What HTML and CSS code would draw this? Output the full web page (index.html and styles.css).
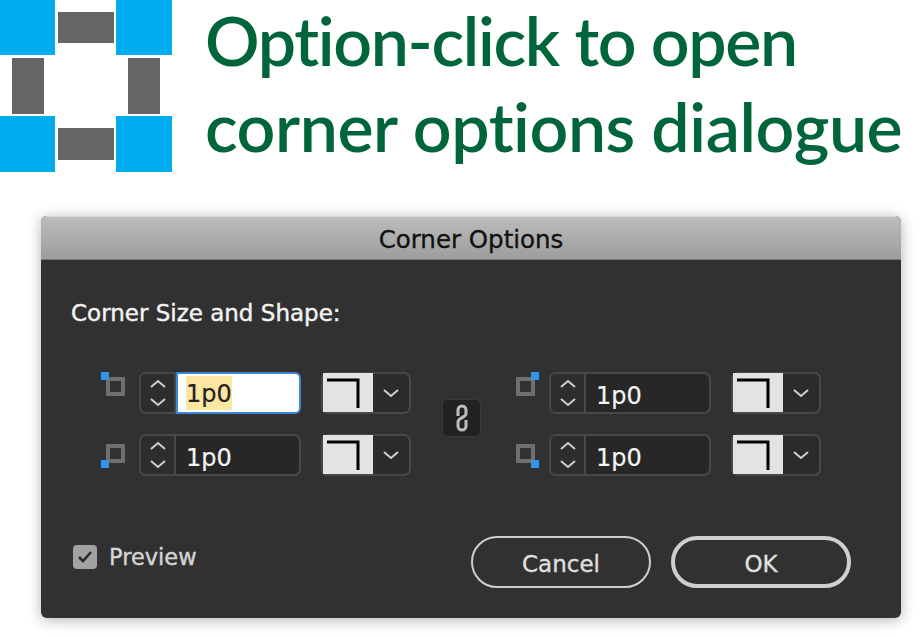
FILE: index.html
```html
<!DOCTYPE html>
<html>
<head>
	<meta charset="UTF-8">
	<title>Corner Options</title>
	<link rel="stylesheet" href="styles.css">
</head>
<body>
	<header class="banner">
		<svg class="logo" width="172" height="172" viewBox="0 0 172 172">
			<rect x="0" y="0" width="55" height="55" fill="#00adef"/>
			<rect x="116" y="0" width="56" height="55" fill="#00adef"/>
			<rect x="0" y="116" width="55" height="56" fill="#00adef"/>
			<rect x="116" y="116" width="56" height="56" fill="#00adef"/>
			<rect x="58" y="12" width="56" height="31" fill="#666567"/>
			<rect x="58" y="128" width="56" height="32" fill="#666567"/>
			<rect x="12" y="58" width="32" height="56" fill="#666567"/>
			<rect x="128" y="58" width="32" height="56" fill="#666567"/>
		</svg>
		<h1 class="headline">
			<span class="line-one">Option-click to open</span><br>
			<span class="line-two">corner options dialogue</span>
		</h1>
	</header>

	<section class="dialog">
		<div class="titlebar">Corner Options</div>
		<div class="dialog-body">
			<div class="section-label">Corner Size and Shape:</div>

			<div class="fields">
				<div class="group group-left">
					<div class="row">
						<svg class="corner corner-high" width="26" height="26" viewBox="0 0 26 26">
							<rect x="8" y="7" width="15" height="15" fill="none" stroke="#6f6f6f" stroke-width="4"/>
							<rect x="1" y="0" width="8" height="8" fill="#2d94f0"/>
						</svg>
						<div class="spinner">
							<div class="steps">
								<svg width="18" height="32" viewBox="0 0 18 32"><path d="M2 10 9 4l7 6M2 22l7 6 7-6" fill="none" stroke="#d0d0d0" stroke-width="2"/></svg>
							</div>
							<div class="value value-focus"><span class="selected">1p0</span></div>
						</div>
						<div class="shape">
							<div class="swatch">
								<svg width="50" height="39" viewBox="0 0 50 39"><path d="M4 7H35V35" fill="none" stroke="#000" stroke-width="3"/></svg>
							</div>
							<div class="arrow">
								<svg width="16" height="10" viewBox="0 0 16 10"><path d="M1 2l7 6 7-6" fill="none" stroke="#d0d0d0" stroke-width="2"/></svg>
							</div>
						</div>
					</div>
					<div class="row">
						<svg class="corner" width="26" height="26" viewBox="0 0 26 26">
							<rect x="8" y="4" width="15" height="15" fill="none" stroke="#6f6f6f" stroke-width="4"/>
							<rect x="1" y="18" width="8" height="8" fill="#2d94f0"/>
						</svg>
						<div class="spinner">
							<div class="steps">
								<svg width="18" height="32" viewBox="0 0 18 32"><path d="M2 10 9 4l7 6M2 22l7 6 7-6" fill="none" stroke="#d0d0d0" stroke-width="2"/></svg>
							</div>
							<div class="value">1p0</div>
						</div>
						<div class="shape">
							<div class="swatch">
								<svg width="50" height="39" viewBox="0 0 50 39"><path d="M4 7H35V35" fill="none" stroke="#000" stroke-width="3"/></svg>
							</div>
							<div class="arrow">
								<svg width="16" height="10" viewBox="0 0 16 10"><path d="M1 2l7 6 7-6" fill="none" stroke="#d0d0d0" stroke-width="2"/></svg>
							</div>
						</div>
					</div>
				</div>

				<div class="link">
					<svg width="14" height="30" viewBox="0 0 14 30">
						<path d="M3 13V7a4 4 0 0 1 8 0v4c0 3-8 4-8 8v4a4 4 0 0 0 8 0v-6" fill="none" stroke="#bdbdbd" stroke-width="3"/>
					</svg>
				</div>

				<div class="group group-right">
					<div class="row">
						<svg class="corner corner-high" width="26" height="26" viewBox="0 0 26 26">
							<rect x="4" y="7" width="15" height="15" fill="none" stroke="#6f6f6f" stroke-width="4"/>
							<rect x="17" y="0" width="8" height="8" fill="#2d94f0"/>
						</svg>
						<div class="spinner">
							<div class="steps">
								<svg width="18" height="32" viewBox="0 0 18 32"><path d="M2 10 9 4l7 6M2 22l7 6 7-6" fill="none" stroke="#d0d0d0" stroke-width="2"/></svg>
							</div>
							<div class="value">1p0</div>
						</div>
						<div class="shape">
							<div class="swatch">
								<svg width="50" height="39" viewBox="0 0 50 39"><path d="M4 7H35V35" fill="none" stroke="#000" stroke-width="3"/></svg>
							</div>
							<div class="arrow">
								<svg width="16" height="10" viewBox="0 0 16 10"><path d="M1 2l7 6 7-6" fill="none" stroke="#d0d0d0" stroke-width="2"/></svg>
							</div>
						</div>
					</div>
					<div class="row">
						<svg class="corner" width="26" height="26" viewBox="0 0 26 26">
							<rect x="4" y="4" width="15" height="15" fill="none" stroke="#6f6f6f" stroke-width="4"/>
							<rect x="17" y="18" width="8" height="8" fill="#2d94f0"/>
						</svg>
						<div class="spinner">
							<div class="steps">
								<svg width="18" height="32" viewBox="0 0 18 32"><path d="M2 10 9 4l7 6M2 22l7 6 7-6" fill="none" stroke="#d0d0d0" stroke-width="2"/></svg>
							</div>
							<div class="value">1p0</div>
						</div>
						<div class="shape">
							<div class="swatch">
								<svg width="50" height="39" viewBox="0 0 50 39"><path d="M4 7H35V35" fill="none" stroke="#000" stroke-width="3"/></svg>
							</div>
							<div class="arrow">
								<svg width="16" height="10" viewBox="0 0 16 10"><path d="M1 2l7 6 7-6" fill="none" stroke="#d0d0d0" stroke-width="2"/></svg>
							</div>
						</div>
					</div>
				</div>
			</div>

			<div class="footer">
				<label class="preview">
					<span class="checkbox">
						<svg width="16" height="14" viewBox="0 0 16 14"><path d="M2 7l4 4 8-9" fill="none" stroke="#2b2b2b" stroke-width="2.6"/></svg>
					</span>
					Preview
				</label>
				<div class="buttons">
					<button class="btn">Cancel</button>
					<button class="btn btn-default">OK</button>
				</div>
			</div>
		</div>
	</section>
</body>
</html>
```

FILE: styles.css
```css
html, body {
	margin: 0;
	padding: 0;
	height: 637px;
	overflow: hidden;
}
body {
	background-color: #fff;
	font-family: "DejaVu Sans", sans-serif;
}
.banner {
	display: flex;
	height: 172px;
	gap: 33px;
}
.logo {
	flex: none;
}
.headline {
	margin: -3px 0 0;
	font-family: Lato, sans-serif;
	font-weight: 600;
	font-size: 68px;
	line-height: 86px;
	color: #00653a;
	white-space: nowrap;
	font-variant-ligatures: none;
}
.line-one {
	letter-spacing: -1.35px;
}
.line-two {
	letter-spacing: -0.43px;
}
.dialog {
	width: 860px;
	height: 402px;
	margin: 44px 0 0 41px;
	border-radius: 6px;
	overflow: hidden;
	background-color: #313131;
	box-shadow: 0 2px 14px rgba(0,0,0,0.3);
}
.titlebar {
	height: 42px;
	line-height: 46px;
	text-align: center;
	font-size: 24.5px;
	color: #111;
	background: linear-gradient(#bcbcbc, #9d9d9d);
	border-top: 1px solid #d8d8d8;
	border-bottom: 1px solid #777;
	-webkit-text-stroke: 0.3px #111;
}
.dialog-body {
	padding: 0 50px 0 30px;
}
.section-label {
	padding-top: 38px;
	height: 74px;
	line-height: 30px;
	font-size: 23px;
	color: #f4f4f4;
	box-sizing: border-box;
	-webkit-text-stroke: 0.4px #f4f4f4;
}
.fields {
	display: flex;
	align-items: center;
	margin-top: 38px;
	padding-left: 29px;
}
.group {
	display: flex;
	flex-direction: column;
	gap: 20px;
}
.row {
	display: flex;
	align-items: center;
	height: 42px;
}
.corner {
	flex: none;
}
.corner-high {
	align-self: flex-start;
}
.group-left .corner {
	margin-right: 13px;
}
.group-right .corner {
	margin-right: 9px;
}
.spinner {
	display: flex;
	width: 162px;
	height: 42px;
	box-sizing: border-box;
	border: 2px solid #484848;
	border-radius: 7px;
	background-color: #272727;
}
.steps {
	display: flex;
	align-items: center;
	justify-content: center;
	width: 35px;
	flex: none;
	background-color: #2d2d2d;
	border-right: 2px solid #484848;
	border-radius: 5px 0 0 5px;
	box-sizing: border-box;
}
.value {
	flex: 1;
	padding: 5px 0 0 10px;
	line-height: 35px;
	font-size: 24px;
	color: #f4f4f4;
	-webkit-text-stroke: 0.2px #f4f4f4;
}
.value-focus {
	margin: -2px -2px -2px 0;
	padding: 2px 0 0 8px;
	border: 2px solid #3d85d5;
	border-radius: 0 6px 6px 0;
	background-color: #fff;
	color: #222;
	-webkit-text-stroke: 0.2px #222;
}
.selected {
	display: inline-block;
	padding-top: 2px;
	background-color: #fde5a2;
	line-height: 32px;
}
.shape {
	display: flex;
	width: 90px;
	height: 42px;
	margin-left: 20px;
	box-sizing: border-box;
	border: 2px solid #484848;
	border-radius: 7px;
	background-color: #2b2b2b;
}
.swatch {
	width: 50px;
	height: 39px;
	margin-top: -1px;
	background-color: #e3e3e3;
}
.swatch svg {
	display: block;
}
.arrow {
	flex: 1;
	display: flex;
	align-items: center;
	justify-content: center;
}
.link {
	display: flex;
	align-items: center;
	justify-content: center;
	width: 39px;
	height: 38px;
	margin: 0 33px 12px 31px;
	box-sizing: border-box;
	border: 1px solid #3a3a3a;
	border-radius: 5px;
	background-color: #222;
}
.footer {
	display: flex;
	justify-content: space-between;
	margin-top: 60px;
}
.preview {
	display: flex;
	align-items: center;
	gap: 12px;
	height: 41px;
	margin-left: 2px;
	font-size: 22.5px;
	color: #d4d4d4;
	-webkit-text-stroke: 0.4px #d4d4d4;
}
.checkbox {
	display: flex;
	align-items: center;
	justify-content: center;
	width: 24px;
	height: 24px;
	border-radius: 4px;
	background-color: #a2a2a2;
}
.buttons {
	display: flex;
	gap: 20px;
}
.btn {
	width: 180px;
	height: 52px;
	padding: 3px 0 0;
	border: 2px solid #cfcfcf;
	border-radius: 26px;
	background: none;
	color: #e0e0e0;
	font-family: "DejaVu Sans", sans-serif;
	font-size: 23px;
	-webkit-text-stroke: 0.3px #e0e0e0;
}
.btn-default {
	border-width: 4px;
}
```
